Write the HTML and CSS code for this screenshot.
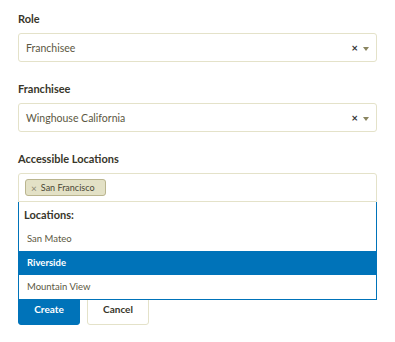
FILE: index.html
```html
<!DOCTYPE html>
<html lang="en">
<head>
    <meta charset="UTF-8">
    <title>New User</title>
    <link rel="stylesheet" href="styles.css">
</head>
<body>
    <form class="user-form">
        <div class="field">
            <label class="field-label">Role</label>
            <div class="select">
                <span class="select-value">Franchisee</span>
                <span class="select-clear">&times;</span>
                <span class="select-arrow"></span>
            </div>
        </div>

        <div class="field">
            <label class="field-label">Franchisee</label>
            <div class="select">
                <span class="select-value">Winghouse California</span>
                <span class="select-clear">&times;</span>
                <span class="select-arrow"></span>
            </div>
        </div>

        <div class="field">
            <label class="field-label">Accessible Locations</label>
            <div class="select select-multi open">
                <span class="tag"><span class="tag-remove">&times;</span>San Francisco</span>
                <ul class="dropdown">
                    <li class="dropdown-group">Locations:</li>
                    <li class="dropdown-item">San Mateo</li>
                    <li class="dropdown-item active">Riverside</li>
                    <li class="dropdown-item">Mountain View</li>
                </ul>
            </div>
        </div>

        <div class="actions">
            <button type="button" class="btn btn-primary">Create</button>
            <button type="button" class="btn btn-default">Cancel</button>
        </div>
    </form>
</body>
</html>
```

FILE: styles.css
```css
:root {
    --text-dark: #38362a;
    --text-muted: #5c5842;
    --border: #e4e2c9;
    --blue: #0073b9;
}

body {
    margin: 0;
    background: #ffffff;
    font-family: Lato, "Open Sans", sans-serif;
    color: var(--text-dark);
}

.user-form {
    padding: 12px 18px;
    width: 359px;
}

.field {
    margin-bottom: 20px;
}

.field-label {
    display: block;
    font-size: 11px;
    font-weight: bold;
    line-height: 14px;
    margin-bottom: 7px;
}

.select {
    position: relative;
    display: flex;
    align-items: center;
    height: 29px;
    box-sizing: border-box;
    border: 1px solid var(--border);
    border-radius: 3px;
    padding: 0 7px;
    font-size: 10.5px;
    color: var(--text-muted);
}

.select-value {
    flex: 1;
}

.select-clear {
    font-size: 11px;
    font-weight: bold;
    color: #333;
    margin-right: 5px;
}

.select-arrow {
    width: 0;
    height: 0;
    border-left: 3px solid transparent;
    border-right: 3px solid transparent;
    border-top: 4px solid #8a8560;
    margin-top: 2px;
}

.select-multi {
    padding: 0 6px;
}

.select-multi.open {
    border-bottom-left-radius: 0;
    border-bottom-right-radius: 0;
}

.tag {
    display: inline-flex;
    align-items: center;
    height: 17px;
    box-sizing: border-box;
    padding: 0 10px 0 5px;
    background: #e3e1c6;
    border: 1px solid #bab58f;
    border-radius: 3px;
    font-size: 9px;
    color: #4a4735;
}

.tag-remove {
    color: #8a8670;
    font-size: 10px;
    margin-right: 4px;
}

/* open options list, overlays the buttons below */
.dropdown {
    position: absolute;
    top: calc(100% + 1px);
    left: -1px;
    right: -1px;
    margin: 0;
    padding: 0;
    list-style: none;
    background: #ffffff;
    border: 1px solid var(--blue);
    border-top: none;
    z-index: 10;
}

.dropdown-group {
    padding: 6px 5px 5px;
    line-height: 14px;
    font-size: 11px;
    font-weight: bold;
    color: var(--text-dark);
}

.dropdown-item {
    padding: 5px 8px;
    line-height: 14px;
    font-size: 9.5px;
    color: var(--text-muted);
}

.dropdown-item.active {
    background: var(--blue);
    color: #ffffff;
    font-weight: bold;
}

.actions {
    display: flex;
    gap: 7px;
    margin-top: 91px;
}

.btn {
    width: 62px;
    height: 32px;
    border-radius: 3px;
    font-family: Lato, "Open Sans", sans-serif;
    font-size: 10px;
    font-weight: bold;
    cursor: pointer;
}

.btn-primary {
    background: var(--blue);
    border: 1px solid var(--blue);
    color: #ffffff;
}

.btn-default {
    background: #ffffff;
    border: 1px solid var(--border);
    color: var(--text-dark);
}
```
